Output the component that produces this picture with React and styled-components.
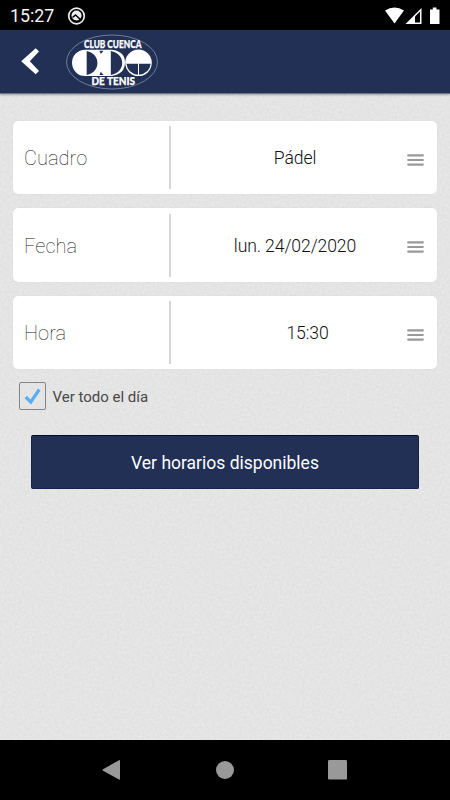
import React from "react";
import styled, { createGlobalStyle } from "styled-components";

const grain = `url("data:image/svg+xml,${encodeURIComponent(
  '<svg xmlns="http://www.w3.org/2000/svg" width="150" height="150"><filter id="n" x="0" y="0" width="100%" height="100%" color-interpolation-filters="sRGB"><feTurbulence type="fractalNoise" baseFrequency="0.4" numOctaves="3" stitchTiles="stitch"/><feColorMatrix values="0.055 0 0 0 0.867  0.055 0 0 0 0.867  0.055 0 0 0 0.867  0 0 0 0 1"/></filter><rect width="150" height="150" filter="url(#n)"/></svg>'
)}")`;

const GlobalStyle = createGlobalStyle`
  * { box-sizing: border-box; }
  body { margin: 0; font-family: Roboto, "Liberation Sans", sans-serif; }
`;

const Screen = styled.div`
  width: 450px;
  height: 800px;
  display: flex;
  flex-direction: column;
  overflow: hidden;
  background: #e4e4e4;
`;

const StatusBar = styled.div`
  height: 30px;
  flex: none;
  display: flex;
  align-items: center;
  padding: 2px 9px 0 10px;
  background: #000;
  color: #f4f4f4;
`;

const Clock = styled.span`
  width: 57px;
  font-size: 17.800px;
  line-height: 28px;
  white-space: nowrap;
`;

const Signals = styled.svg`
  margin: -1px 0 0 auto;
  display: block;
`;

const Icon = styled.svg`
  display: block;
  flex: none;
`;

const Header = styled.header`
  height: 64px;
  flex: none;
  display: flex;
  align-items: center;
  background: #223056;
  border-bottom: 1px solid #6d7383;
  box-shadow: 0 1px 2px rgba(0, 0, 0, 0.3);
  z-index: 1;
`;

const BackButton = styled.button`
  width: 65px;
  height: 63px;
  padding: 0;
  border: 0;
  background: none;
`;

const Content = styled.main`
  flex: 1;
  padding: 27px 13px 0;
  background-color: #e4e4e4;
  background-image: ${grain};
`;

const Fields = styled.div`
  display: flex;
  flex-direction: column;
  gap: 14.3px;
`;

const Field = styled.div`
  height: 73.2px;
  display: flex;
  align-items: center;
  background: #fff;
  border-radius: 5px;
  box-shadow: 0 0 1px rgba(0, 0, 0, 0.12);
`;

const Label = styled.div`
  width: 158px;
  height: 63px;
  padding-left: 11px;
  border-right: 2px solid #d6d6d6;
  font-size: 20px;
  font-weight: 100;
  line-height: 64px;
  letter-spacing: 0.05px;
  color: #111;
`;

const Value = styled.div`
  flex: 1;
  padding: 1px 0 0 ${(p) => p.$shift || 12}px;
  text-align: center;
  font-size: 17.600px;
  font-weight: 300;
  line-height: 64px;
  letter-spacing: -0.1px;
  color: #111;
`;

const Handle = styled(Icon)`
  margin: 4px 13px 0 0;
`;

const CheckRow = styled.label`
  display: flex;
  align-items: center;
  gap: 6.500px;
  height: 28px;
  margin: 13px 0 0 6px;
  font-size: 15px;
  line-height: 20px;
  color: #484848;
`;

const CheckText = styled.span`
  padding-top: 1px;
`;

const CheckBox = styled.span`
  width: 27px;
  height: 28px;
  display: grid;
  place-items: center;
  border: 1px solid #858585;
  border-radius: 2px;
`;

const SubmitButton = styled.button`
  display: block;
  width: 388px;
  height: 54px;
  margin: 25px 0 0 18px;
  padding: 1px 0 0;
  border: 1px solid #14234a;
  border-top-color: #030b20;
  border-radius: 2px;
  background: #223056;
  color: #fff;
  font-family: inherit;
  font-size: 17.500px;
`;

const NavBar = styled.nav`
  height: 60px;
  flex: none;
  display: grid;
  grid-template-columns: repeat(3, 113px);
  justify-content: center;
  justify-items: center;
  align-items: center;
  background: #000;
`;

const rows = [
  { label: "Cuadro", value: "Pádel" },
  { label: "Fecha", value: "lun. 24/02/2020" },
  { label: "Hora", value: "15:30", shift: 37 },
];

function ClubLogo() {
  return (
    <Icon width="94" height="60" viewBox="65 31.500 94 60">
      <ellipse cx="112" cy="61.500" rx="45.500" ry="27" fill="none" stroke="#8790a8" strokeWidth="0.8" />
      <path d="M85 49.200H112Q125 51 125 62T112 75.500H85A13 13.150 0 0 1 85 49.200Z" fill="#fff" />
      <circle cx="138.500" cy="62.300" r="13.300" fill="#fff" />
      <g fill="#223056">
        <path d="M86.700 50.500C101 53 101 72 86.700 74.500Z" />
        <path d="M110.800 50.500C126 53 126 72 110.800 74.500Z" />
        <path d="M99.500 50.300H103.500L100.800 53.500ZM99.500 74.500H103.500L100.800 71.300Z" />
        <path d="M126.500 63.300H138V74.200Q127.500 73 126.500 63.300ZM139 63.300H150.700Q149.500 73 139 74.200Z" />
      </g>
      <g fill="#fff" stroke="#fff" strokeWidth="0.25" fontFamily="Lato, Roboto, sans-serif" fontWeight="900" fontSize="10.300">
        <text x="84" y="47.900" textLength="57.500" lengthAdjust="spacingAndGlyphs">CLUB CUENCA</text>
        <text x="91.500" y="84.700" textLength="43.500" lengthAdjust="spacingAndGlyphs">DE TENIS</text>
      </g>
    </Icon>
  );
}

export default function App() {
  return (
    <>
      <GlobalStyle />
      <Screen>
        <StatusBar>
          <Clock>15:27</Clock>
          <Icon width="19" height="19" viewBox="67 6 19 19">
            <circle cx="76.500" cy="15" r="7.800" fill="none" stroke="#eee" strokeWidth="1.700" />
            <circle cx="76.500" cy="14.500" r="5" fill="#eee" />
            <path d="M72.500 16.500L75.500 14L81 19" fill="none" stroke="#000" strokeWidth="1.500" />
          </Icon>
          <Signals width="57" height="20" viewBox="384.500 5 57 20">
            <path d="M385.500 9.500Q395 3.500 404.500 9.500L395 22.500Z" fill="#fff" />
            <path d="M406 23L422 7V23Z" fill="#fff" />
            <path d="M415.500 15.500L420.500 10.500V21.500H415.500Z" fill="#000" />
            <path d="M430.500 8.500H433.300V6.500H437V8.500H440V23H430.500Z" fill="#fff" />
          </Signals>
        </StatusBar>
        <Header>
          <BackButton aria-label="Atrás">
            <Icon width="65" height="63" viewBox="0.500 30 65 63">
              <path d="M36.200 48.200L39.500 51.600L30.300 61.300L39.500 70.900L36.200 74.300L21.700 61.300Z" fill="#fff" />
            </Icon>
          </BackButton>
          <ClubLogo />
        </Header>
        <Content>
          <Fields>
            {rows.map((row) => (
              <Field key={row.label}>
                <Label>{row.label}</Label>
                <Value $shift={row.shift}>{row.value}</Value>
                <Handle width="17" height="12" viewBox="0 0 17 12">
                  <path d="M1.200 1.400H15.800M1.200 6H15.800M1.200 10.600H15.800" stroke="#999" strokeWidth="2.200" strokeLinecap="round" />
                </Handle>
              </Field>
            ))}
          </Fields>
          <CheckRow>
            <CheckBox>
              <Icon width="17" height="17" viewBox="24 388.500 17 17">
                <path d="M25.700 397.500L30.800 402.500L39.300 390" fill="none" stroke="#58adf5" strokeWidth="3.200" />
              </Icon>
            </CheckBox>
            <CheckText>Ver todo el día</CheckText>
          </CheckRow>
          <SubmitButton>Ver horarios disponibles</SubmitButton>
        </Content>
        <NavBar>
          <Icon width="20" height="22" viewBox="0.500 0 20 22">
            <path d="M1.500 10.200L17.500 1.200Q18.500 0.800 18.500 2V20Q18.500 21 17.500 20.500L1.500 11.800Q.5 11 1.500 10.200Z" fill="#999" />
          </Icon>
          <Icon width="18" height="18" viewBox="0 0 18 18">
            <circle cx="9" cy="9" r="9" fill="#999" />
          </Icon>
          <Icon width="21" height="20" viewBox="0 0 21 20">
            <rect width="19" height="19.500" rx="1.300" fill="#999" />
          </Icon>
        </NavBar>
      </Screen>
    </>
  );
}
